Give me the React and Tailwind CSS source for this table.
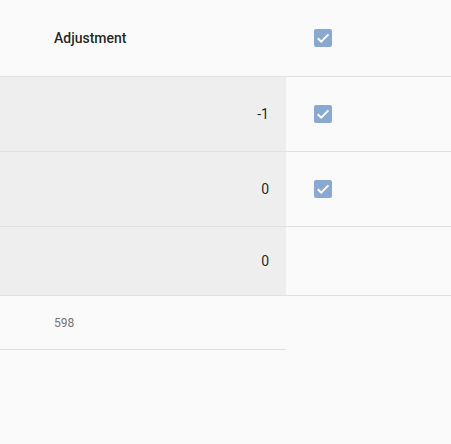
import React from "react";

function Check() {
  return (
    <div className="w-[18px] h-[18px] rounded-[2px] bg-[#8aa9d2]">
      <svg width="18" height="18" viewBox="0 0 18 18" fill="none">
        <path d="M3.8 9.2l3.4 3.4L14.4 5.4" stroke="#ffffff" strokeWidth="2" strokeLinecap="butt" strokeLinejoin="miter" />
      </svg>
    </div>
  );
}

function Row({ value, checked, h }) {
  return (
    <div className={`flex border-b border-[#e0e0e0] ${h}`}>
      <div className="w-[286px] shrink-0 bg-[#eeeeee] flex items-center justify-end pr-[17px] text-[14px] text-[rgba(0,0,0,0.87)]">
        {value}
      </div>
      <div className="flex-1 flex items-center pl-[28px]">{checked ? <Check /> : null}</div>
    </div>
  );
}

export default function App() {
  return (
    <div className="w-[451px] h-[444px] bg-[#fafafa] font-['Roboto',sans-serif]">
      <div className="flex h-[77px] border-b border-[#e0e0e0]">
        <div className="w-[286px] shrink-0 flex items-center pl-[54px] text-[14px] font-medium text-[rgba(0,0,0,0.87)]">
          Adjustment
        </div>
        <div className="flex-1 flex items-center pl-[28px]">
          <Check />
        </div>
      </div>
      <Row value="-1" checked h="h-[75px]" />
      <Row value="0" checked h="h-[75px]" />
      <Row value="0" h="h-[69px]" />
      <div className="w-[286px] h-[54px] border-b border-[#e0e0e0] flex items-center pl-[54px] text-[12px] text-[#757575]">
        598
      </div>
    </div>
  );
}
